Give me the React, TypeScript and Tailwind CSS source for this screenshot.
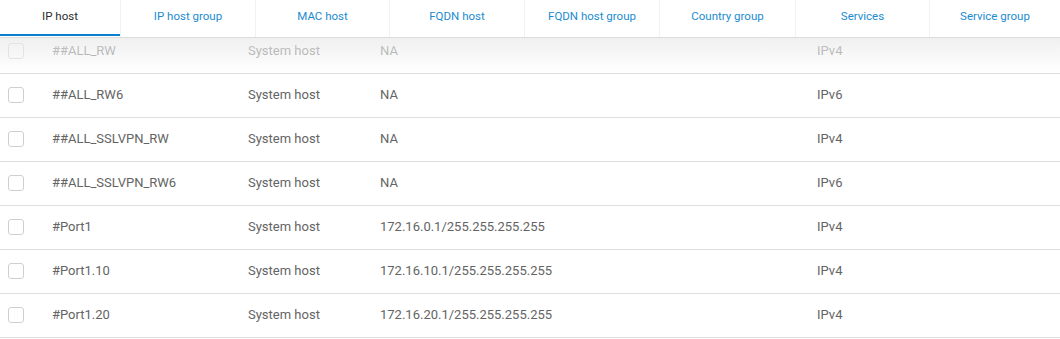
const tabs = [
  { label: "IP host", w: "w-[120px]" },
  { label: "IP host group", w: "w-[135px]" },
  { label: "MAC host", w: "w-[134px]" },
  { label: "FQDN host", w: "w-[135px]" },
  { label: "FQDN host group", w: "w-[135px]" },
  { label: "Country group", w: "w-[136px]" },
  { label: "Services", w: "w-[134px]" },
  { label: "Service group", w: "flex-1" },
];

const rows = [
  { name: "##ALL_RW", type: "System host", value: "NA", ver: "IPv4" },
  { name: "##ALL_RW6", type: "System host", value: "NA", ver: "IPv6" },
  { name: "##ALL_SSLVPN_RW", type: "System host", value: "NA", ver: "IPv4" },
  { name: "##ALL_SSLVPN_RW6", type: "System host", value: "NA", ver: "IPv6" },
  { name: "#Port1", type: "System host", value: "172.16.0.1/255.255.255.255", ver: "IPv4" },
  { name: "#Port1.10", type: "System host", value: "172.16.10.1/255.255.255.255", ver: "IPv4" },
  { name: "#Port1.20", type: "System host", value: "172.16.20.1/255.255.255.255", ver: "IPv4" },
];

export default function App() {
  return (
    <div className="h-[339px] w-[1060px] overflow-hidden bg-white font-['Roboto',sans-serif] text-[13px] text-[#646464]">
      {/* Tab strip */}
      <div className="relative z-10 flex h-[38px] border-b border-[#dcdcdc] bg-white">
        {tabs.map((t, i) => (
          <div
            key={t.label}
            className={`${t.w} relative flex h-full items-center justify-center pb-[3px] text-[11.5px] ${
              i === 0 ? "text-[#2b2b2b]" : "text-[#1b8bd0]"
            } ${i > 0 ? "border-l border-[#f2f2f2]" : ""}`}
          >
            {t.label}
            {i === 0 && <div className="absolute bottom-[1px] left-0 h-[2px] w-full bg-[#0a7fd1]" />}
          </div>
        ))}
      </div>

      {/* Table body, scrolled a little */}
      <div className="relative h-[301px] overflow-hidden">
        <div className="-mt-[8px]">
          {rows.map((r) => (
            <div key={r.name} className="flex h-[44px] items-center border-b border-[#dedede] pb-[1px]">
              <div className="ml-[8px] h-[16px] w-[16px] rounded-[3px] border border-[#cfcfcf] bg-white" />
              <div className="ml-[28px] w-[196px]">{r.name}</div>
              <div className="w-[132px]">{r.type}</div>
              <div className="w-[437px]">{r.value}</div>
              <div>{r.ver}</div>
            </div>
          ))}
        </div>
        {/* fade under the tab strip */}
        <div className="pointer-events-none absolute left-0 top-0 h-[35px] w-full bg-gradient-to-b from-[rgba(235,235,235,0.75)] to-[rgba(255,255,255,0.4)]" />
      </div>
    </div>
  );
}
